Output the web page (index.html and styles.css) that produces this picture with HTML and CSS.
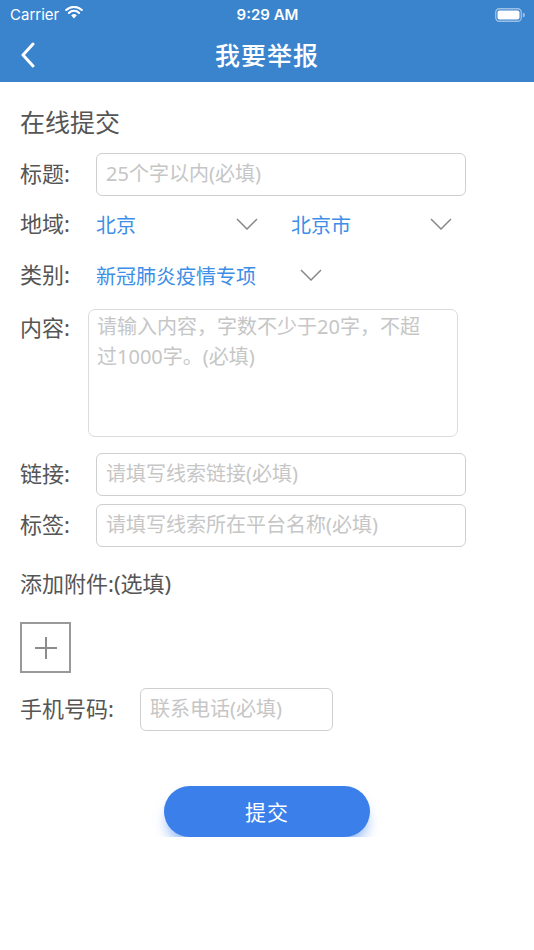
FILE: index.html
```html
<!DOCTYPE html>
<html lang="zh-CN">
<head>
<meta charset="UTF-8">
<meta name="viewport" content="width=device-width, initial-scale=1.0">
<title>我要举报</title>
<link rel="stylesheet" href="styles.css">
</head>
<body>

<!-- Top blue area: status bar + navigation -->
<div class="top-bar">
  <div class="status-bar">
    <div class="status-left">
      <span>Carrier</span>
      <svg class="wifi" width="18" height="13" viewBox="0 0 18 13">
        <path d="M9 12.5 L6.2 9.4 A4 4 0 0 1 11.8 9.4 Z" fill="#fff"/>
        <path d="M3.9 6.9 A7.3 7.3 0 0 1 14.1 6.9" stroke="#fff" stroke-width="2.1" fill="none" stroke-linecap="round"/>
        <path d="M1.2 4 A11.2 11.2 0 0 1 16.8 4" stroke="#fff" stroke-width="2.1" fill="none" stroke-linecap="round"/>
      </svg>
    </div>
    <div class="status-time">9:29 AM</div>
    <div class="status-right">
      <svg width="30" height="14" viewBox="0 0 30 14">
        <rect x="0.75" y="0.75" width="25.5" height="12.5" rx="3.5" fill="none" stroke="rgba(255,255,255,0.5)" stroke-width="1.3"/>
        <rect x="2.5" y="2.5" width="22" height="9" rx="2" fill="#fff"/>
        <path d="M27.8 4.8 A2 2 0 0 1 27.8 9.2 Z" fill="rgba(255,255,255,0.5)"/>
      </svg>
    </div>
  </div>
  <header class="nav-bar">
    <button class="back-btn" aria-label="返回">
      <svg width="16" height="26" viewBox="0 0 16 26">
        <polyline points="13,2 3,13 13,24" fill="none" stroke="#fff" stroke-width="3" stroke-linecap="round" stroke-linejoin="round"/>
      </svg>
    </button>
    <h1 class="nav-title">我要举报</h1>
    <span></span>
  </header>
</div>

<main class="form">
  <h2 class="section-title">在线提交</h2>

  <div class="row row-title">
    <label class="label">标题:</label>
    <input class="text-input" type="text" placeholder="25个字以内(必填)">
  </div>

  <div class="row row-region">
    <label class="label">地域:</label>
    <div class="select select-province">
      <span>北京</span>
      <svg class="chevron" width="22" height="12" viewBox="0 0 22 12"><polyline points="1,1 11,11 21,1" fill="none" stroke="#888" stroke-width="1.5"/></svg>
    </div>
    <div class="select select-city">
      <span>北京市</span>
      <svg class="chevron" width="22" height="12" viewBox="0 0 22 12"><polyline points="1,1 11,11 21,1" fill="none" stroke="#888" stroke-width="1.5"/></svg>
    </div>
  </div>

  <div class="row row-category">
    <label class="label">类别:</label>
    <div class="select select-category">
      <span>新冠肺炎疫情专项</span>
      <svg class="chevron" width="22" height="12" viewBox="0 0 22 12"><polyline points="1,1 11,11 21,1" fill="none" stroke="#888" stroke-width="1.5"/></svg>
    </div>
  </div>

  <div class="row row-content">
    <label class="label label-content">内容:</label>
    <textarea class="text-area" placeholder="请输入内容，字数不少于20字，不超过1000字。(必填)"></textarea>
  </div>

  <div class="row row-link">
    <label class="label">链接:</label>
    <input class="text-input" type="text" placeholder="请填写线索链接(必填)">
  </div>

  <div class="row row-tag">
    <label class="label">标签:</label>
    <input class="text-input" type="text" placeholder="请填写线索所在平台名称(必填)">
  </div>

  <div class="attach-title">添加附件:(选填)</div>
  <button class="add-btn" aria-label="添加附件"><span class="plus"></span></button>

  <div class="row row-phone">
    <label class="label label-phone">手机号码:</label>
    <input class="text-input phone-input" type="text" placeholder="联系电话(必填)">
  </div>

  <div class="submit-wrap">
    <button class="submit-btn">提交</button>
  </div>
</main>

</body>
</html>
```

FILE: styles.css
```css
body {
  margin: 0;
  background: #fff;
  font-family: "Noto Sans", "Noto Sans CJK SC", sans-serif;
  color: #555;
}

/* Blue header area */
.top-bar {
  background: #3a83cd;
  color: #fff;
}

.status-bar {
  height: 28px;
  display: grid;
  grid-template-columns: 1fr auto 1fr;
  align-items: center;
  padding: 0 9px 0 10px;
  font-family: Inter, Roboto, sans-serif;
  font-size: 15px;
}

.status-left {
  display: flex;
  align-items: center;
  gap: 6px;
}

.wifi {
  margin-top: -3px;
}

.status-time {
  font-weight: 600;
}

.status-right {
  display: flex;
  justify-content: flex-end;
  padding-top: 1px;
}

.nav-bar {
  height: 54px;
  display: grid;
  grid-template-columns: 1fr auto 1fr;
  align-items: center;
}

.back-btn {
  justify-self: start;
  background: none;
  border: none;
  padding: 0 0 0 20px;
  display: flex;
  cursor: pointer;
}

.nav-title {
  margin: 0;
  font-size: 25px;
  font-weight: 500;
  letter-spacing: 1px;
  line-height: 30px;
}

/* Form */
.form {
  padding: 25px 0 0 20px;
}

.section-title {
  margin: 0 0 3px;
  font-size: 25px;
  font-weight: 400;
  line-height: 30px;
  color: #555;
}

.row {
  display: flex;
  align-items: center;
}

.label {
  width: 76px;
  flex-shrink: 0;
  margin-top: -4px;
  font-size: 22px;
  line-height: 30px;
  color: #555;
}

.text-input {
  box-sizing: border-box;
  width: 370px;
  height: 43px;
  border: 1.5px solid #cfcfcf;
  border-radius: 6px;
  padding: 0 9px 3px;
  font-family: inherit;
  font-size: 20px;
  color: #333;
  outline: none;
}

.text-input::placeholder,
.text-area::placeholder {
  color: #c6c6c6;
}

.row-title {
  margin-top: 16px;
}

.row-region {
  margin-top: 8px;
  height: 42px;
}

.row-category {
  margin-top: 9px;
  height: 42px;
}

.select {
  display: flex;
  align-items: center;
  justify-content: space-between;
  font-size: 20px;
  color: #3d8ee6;
}

.select span {
  margin-top: -1px;
}

.select-province {
  width: 162px;
}

.select-city {
  width: 161px;
  margin-left: 33px;
}

.select-category {
  width: 226px;
}

.chevron {
  margin-top: -2px;
}

.row-content {
  margin-top: 12px;
  align-items: flex-start;
}

.label-content {
  width: 68px;
  margin-top: 0;
  padding-top: 3px;
}

.text-area {
  box-sizing: border-box;
  width: 370px;
  height: 128px;
  border: 1px solid #dcdcdc;
  border-radius: 7px;
  padding: 2px 22px 4px 8px;
  font-family: inherit;
  font-size: 20px;
  line-height: 30px;
  resize: none;
  outline: none;
}

.row-link {
  margin-top: 16px;
}

.row-tag {
  margin-top: 8px;
}

.attach-title {
  margin-top: 21px;
  font-size: 22px;
  line-height: 30px;
  color: #555;
}

.add-btn {
  display: block;
  box-sizing: border-box;
  width: 51px;
  height: 51px;
  margin-top: 24px;
  border: 2px solid #999;
  background: #fff;
  padding: 0;
  position: relative;
  cursor: pointer;
}

/* plus sign drawn with two bars */
.plus::before,
.plus::after {
  content: "";
  position: absolute;
  background: #8c8c8c;
  left: 50%;
  top: 50%;
  transform: translate(-50%, -50%);
}

.plus::before {
  width: 22px;
  height: 2px;
}

.plus::after {
  width: 2px;
  height: 22px;
}

.row-phone {
  margin-top: 15px;
}

.label-phone {
  width: 120px;
}

.phone-input {
  width: 193px;
}

.submit-wrap {
  display: flex;
  justify-content: center;
  padding-right: 20px;
  margin-top: 55px;
}

.submit-btn {
  width: 206px;
  height: 51px;
  border: none;
  border-radius: 26px;
  background: #3a7fea;
  color: #fff;
  font-family: inherit;
  font-size: 21px;
  letter-spacing: 1px;
  padding-bottom: 3px;
  box-shadow: 0 10px 14px -4px rgba(50, 120, 240, 0.6);
  cursor: pointer;
}
```
